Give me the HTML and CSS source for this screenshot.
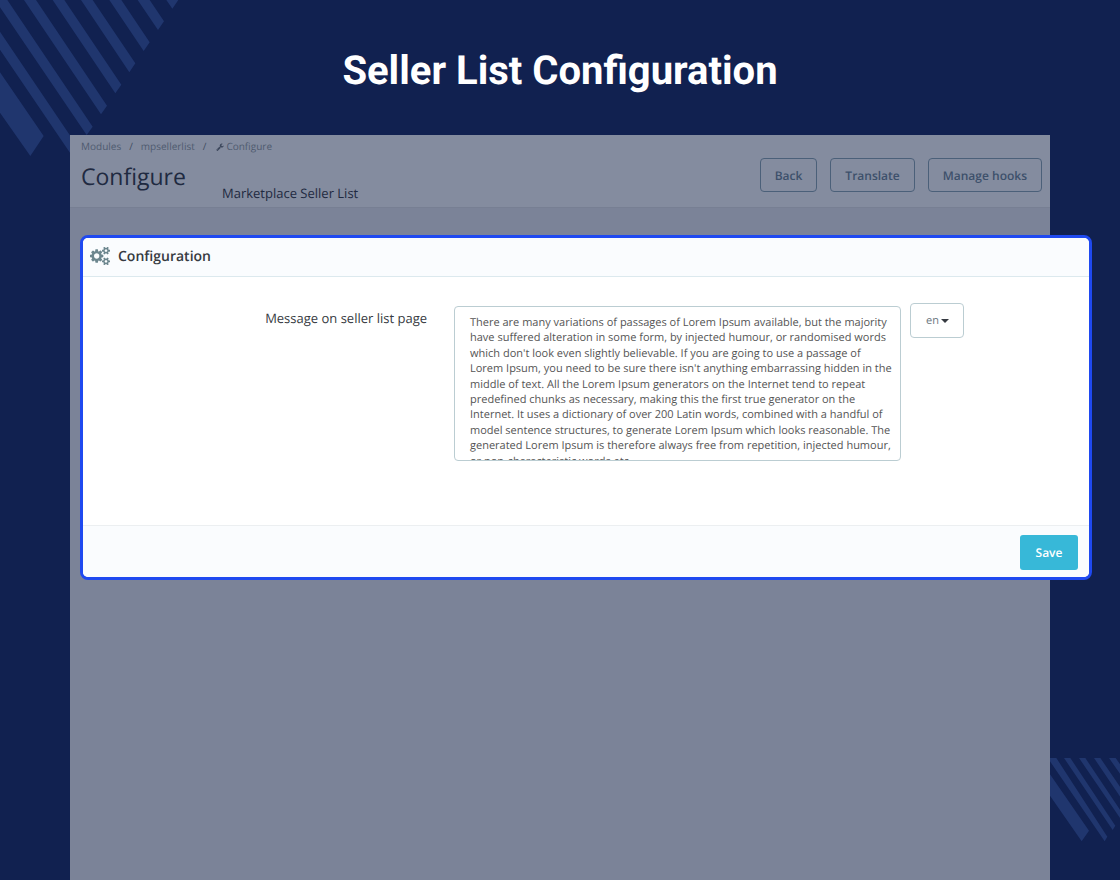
FILE: index.html
```html
<!DOCTYPE html>
<html lang="en">
<head>
  <meta charset="UTF-8" />
  <meta name="viewport" content="width=device-width, initial-scale=1.0" />
  <title>Seller List Configuration</title>
  <link rel="stylesheet" href="styles.css">
</head>
<body>
  <svg class="stripes stripes-top" width="180" height="160" viewBox="0 0 540 480" aria-hidden="true">
    <path d="M0 217L131 408 91 468 0 338zM0 95L235 443 217 469 0 149zM-15 0H22L278 380 260 405zM72 0H108L321 317 303 343zM158 0H193L364 254 346 280zM243 0H278L406 190 388 217zM328 0H364L449 127 431 153zM413 0H449L492 64 474 90zM499 0H535L517 26z" />
  </svg>
  <svg class="stripes stripes-bottom" width="70" height="84" viewBox="0 0 210 252" aria-hidden="true">
    <path d="M0 49L117 218 95 250 0 113zM-1 0H19L172 236 164 250 0 10zM42 0H61L196 203 188 216zM87 0H106L220 170 212 183zM132 0H151L240 130 240 160zM177 0H197L220 33 220 62z" />
  </svg>

  <h1 class="title">Seller List Configuration</h1>

  <main class="admin">
    <header class="page-head">
      <nav class="breadcrumb">
        <a href="#">Modules</a>
        <span>/</span>
        <a href="#">mpsellerlist</a>
        <span>/</span>
        <a href="#">
          <svg class="wrench" viewBox="0 0 1792 1792" aria-hidden="true"><path d="M448 1472q0-26-19-45t-45-19-45 19-19 45 19 45 45 19 45-19 19-45zm644-420l-682 682q-37 37-90 37-52 0-91-37l-106-108q-38-36-38-90 0-53 38-91l681-681q39 98 114.500 173.500t173.500 114.500zm634-435q0 39-23 106-47 134-164.500 217.500t-258.500 83.500q-185 0-316.500-131.500t-131.500-316.500 131.500-316.500 316.500-131.500q58 0 121.500 16.500t107.500 46.500q16 11 16 28t-16 28l-293 169v224l193 107q5-3 79-48.500t135.500-81 70.500-35.500q15 0 23.500 10t8.500 25z" /></svg>Configure</a>
      </nav>
      <div class="head-row">
        <h2>Configure</h2>
        <h3>Marketplace Seller List</h3>
        <div class="actions">
          <button type="button">Back</button>
          <button type="button">Translate</button>
          <button type="button">Manage hooks</button>
        </div>
      </div>
    </header>

    <form class="panel" onsubmit="return false">
      <div class="panel-heading">
        <svg class="cogs" viewBox="0 -60 1920 1656" aria-hidden="true"><path d="M896 768q0-106-75-181t-181-75-181 75-75 181 75 181 181 75 181-75 75-181zm768 512q0-52-38-90t-90-38-90 38-38 90q0 53 37.500 90.500t90.500 37.500 90.500-37.500 37.500-90.500zm0-1024q0-52-38-90t-90-38-90 38-38 90q0 53 37.500 90.500t90.500 37.500 90.500-37.500 37.500-90.500zm-384 421v185q0 10-7 19.500t-16 10.500l-155 24q-11 35-32 76 34 48 90 115 7 11 7 20 0 12-7 19-23 30-82.500 89.500t-78.500 59.500q-11 0-21-7l-115-90q-37 19-77 31-11 108-23 155-7 24-30 24h-186q-11 0-20-7.500t-10-17.500l-23-153q-34-10-75-31l-118 89q-7 7-20 7-11 0-21-8-144-133-144-160 0-9 7-19 10-14 41-53t47-61q-23-44-35-82l-152-24q-10-1-17-9.500t-7-19.500v-185q0-10 7-19.500t16-10.500l155-24q11-35 32-76-34-48-90-115-7-11-7-20 0-12 7-20 22-30 82-89t79-59q11 0 21 7l115 90q34-18 77-32 11-108 23-154 7-24 30-24h186q11 0 20 7.500t10 17.500l23 153q34 10 75 31l118-89q8-7 20-7 11 0 21 8 144 133 144 160 0 8-7 19-12 16-42 54t-45 60q23 48 34 82l152 23q10 2 17 10.500t7 19.500zm640 533v140q0 16-149 31-12 27-30 52 51 113 51 138 0 4-4 7-122 71-124 71-8 0-46-47t-52-68q-20 2-30 2t-30-2q-14 21-52 68t-46 47q-2 0-124-71-4-3-4-7 0-25 51-138-18-25-30-52-149-15-149-31v-140q0-16 149-31 13-29 30-52-51-113-51-138 0-4 4-7 4-2 35-20t59-34 30-16q8 0 46 46.500t52 67.500q20-2 30-2t30 2q51-71 92-112l6-2q4 0 124 70 4 3 4 7 0 25-51 138 17 23 30 52 149 15 149 31zm0-1024v140q0 16-149 31-12 27-30 52 51 113 51 138 0 4-4 7-122 71-124 71-8 0-46-47t-52-68q-20 2-30 2t-30-2q-14 21-52 68t-46 47q-2 0-124-71-4-3-4-7 0-25 51-138-18-25-30-52-149-15-149-31v-140q0-16 149-31 13-29 30-52-51-113-51-138 0-4 4-7 4-2 35-20t59-34 30-16q8 0 46 46.500t52 67.500q20-2 30-2t30 2q51-71 92-112l6-2q4 0 124 70 4 3 4 7 0 25-51 138 17 23 30 52 149 15 149 31z" /></svg>
        Configuration
      </div>
      <div class="panel-body">
        <label for="message">Message on seller list page</label>
        <textarea id="message" spellcheck="false">There are many variations of passages of Lorem Ipsum available, but the majority have suffered alteration in some form, by injected humour, or randomised words which don't look even slightly believable. If you are going to use a passage of Lorem Ipsum, you need to be sure there isn't anything embarrassing hidden in the middle of text. All the Lorem Ipsum generators on the Internet tend to repeat predefined chunks as necessary, making this the first true generator on the Internet. It uses a dictionary of over 200 Latin words, combined with a handful of model sentence structures, to generate Lorem Ipsum which looks reasonable. The generated Lorem Ipsum is therefore always free from repetition, injected humour, or non-characteristic words etc.</textarea>
        <div class="lang">
          <select aria-label="Language">
            <option>en</option>
          </select>
          <span class="caret"></span>
        </div>
      </div>
      <div class="panel-footer">
        <button type="submit">Save</button>
      </div>
    </form>
  </main>
</body>
</html>
```
FILE: styles.css
```css
* {
  box-sizing: border-box;
}
body {
  margin: 0;
  min-height: 100vh;
  display: flex;
  flex-direction: column;
  position: relative;
  overflow-x: hidden;
  background-color: #112150;
  font-family: "Open Sans", sans-serif;
  text-rendering: geometricPrecision;
}
h2, h3 {
  margin: 0;
  font-weight: 400;
}
button, select, textarea {
  font-family: inherit;
  text-rendering: inherit;
}
.stripes {
  position: absolute;
  fill: #20366e;
}
.stripes-top {
  top: 0;
  left: 0;
}
.stripes-bottom {
  right: 0;
  bottom: 38px;
}
.title {
  margin: 0;
  padding: 41px 0 34px;
  color: #fff;
  font-family: Roboto, sans-serif;
  font-size: 40px;
  font-weight: 700;
  line-height: 60px;
  text-align: center;
}

/* dimmed back office page */
.admin {
  position: relative;
  flex: 1;
  margin: 0 70px;
  background-color: #7b8398;
}
.page-head {
  height: 73px;
  padding: 3px 8px 0 11px;
  background-color: #848c9f;
  border-bottom: 1px solid #777f93;
}
.breadcrumb {
  display: flex;
  gap: 8px;
  font-size: 10px;
  line-height: 16px;
  color: #414c5f;
}
.breadcrumb a {
  color: #4f5b6f;
  text-decoration: none;
}
.wrench {
  width: 8px;
  height: 8px;
  margin: 0 2px;
  vertical-align: -1px;
  fill: #3c475c;
}
.head-row {
  display: flex;
  align-items: flex-start;
  color: #1f2a41;
}
.head-row h2 {
  width: 141px;
  padding-top: 6px;
  font-size: 23px;
  line-height: 32px;
}
.head-row h3 {
  padding-top: 29px;
  font-size: 13px;
  line-height: 20px;
}
.actions {
  display: flex;
  gap: 13px;
  margin-left: auto;
  padding-top: 4px;
}
.actions button {
  height: 34px;
  padding: 0 14px;
  background: none;
  border: 1px solid #4b6079;
  border-radius: 4px;
  color: #3d506b;
  font-size: 12px;
  font-weight: 600;
}

/* highlighted panel, wider than the page behind it */
.panel {
  margin: 27px -42px 0 10px;
  border: 3px solid #1f49f0;
  border-radius: 8px;
  background-color: #fff;
  overflow: hidden;
}
.panel-heading {
  display: flex;
  align-items: center;
  gap: 8px;
  height: 39px;
  padding: 0 7px 2px;
  background-color: #fafcfe;
  border-bottom: 1px solid #dce9ee;
  color: #363a41;
  font-size: 14px;
  font-weight: 600;
}
.cogs {
  width: 20px;
  height: 18px;
  fill: #6c868e;
}
.panel-body {
  display: flex;
  align-items: flex-start;
  height: 248px;
  padding-top: 26px;
}
.panel-body label {
  width: 344px;
  margin-right: 27px;
  padding-top: 5px;
  color: #363a41;
  font-size: 13px;
  line-height: 20px;
  text-align: right;
}
.panel-body textarea {
  width: 447px;
  height: 155px;
  margin: 3px 9px 0 0;
  padding: 8px 7px 6px 15px;
  border: 1px solid #bbcdd2;
  border-radius: 4px;
  color: #555;
  font-size: 11px;
  line-height: 1.4;
  resize: none;
  overflow: hidden;
}
.lang {
  position: relative;
}
.lang select {
  width: 54px;
  height: 35px;
  padding: 0 15px;
  appearance: none;
  background-color: #fff;
  border: 1px solid #bbcdd2;
  border-radius: 4px;
  color: #6c7680;
  font-size: 11px;
}
.caret {
  position: absolute;
  top: 16px;
  right: 15px;
  border: 4px solid transparent;
  border-top-color: #363a41;
  border-bottom: 0;
  pointer-events: none;
}
.panel-footer {
  display: flex;
  justify-content: flex-end;
  height: 52px;
  padding: 9px 11px 0 0;
  background-color: #fafcfe;
  border-top: 1px solid #eceff1;
}
.panel-footer button {
  width: 58px;
  height: 35px;
  padding: 0;
  background-color: #37b8d8;
  border: 0;
  border-radius: 3px;
  color: #fff;
  font-size: 12px;
  font-weight: 600;
}
```
